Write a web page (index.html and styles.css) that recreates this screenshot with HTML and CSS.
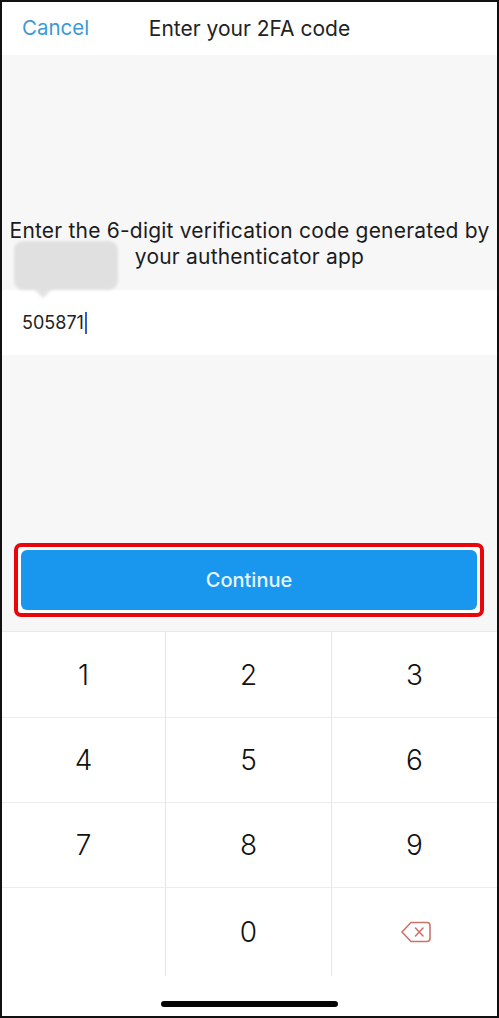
FILE: index.html
```html
<!DOCTYPE html>
<html lang="en">
<head>
  <meta charset="UTF-8" />
  <meta name="viewport" content="width=device-width, initial-scale=1.0"/>
  <title>Enter your 2FA code</title>
  <link rel="stylesheet" href="styles.css">
</head>
<body>
  <div class="screen">
    <header class="topbar">
      <a href="#" class="cancel">Cancel</a>
      <h1>Enter your 2FA code</h1>
    </header>

    <section class="prompt">
      <p>Enter the 6-digit verification code generated by your authenticator app</p>
      <div class="bubble"></div>
    </section>

    <div class="code-row">
      <span class="code">505871</span><span class="caret"></span>
    </div>

    <section class="action">
      <div class="highlight">
        <button class="continue">Continue</button>
      </div>
    </section>

    <div class="keypad">
      <div class="key">1</div>
      <div class="key">2</div>
      <div class="key">3</div>
      <div class="key">4</div>
      <div class="key">5</div>
      <div class="key">6</div>
      <div class="key">7</div>
      <div class="key">8</div>
      <div class="key">9</div>
      <div class="key blank"></div>
      <div class="key">0</div>
      <div class="key del">
        <svg width="32" height="24" viewBox="0 0 32 24" fill="none" stroke="#c9736c" stroke-width="1.6" stroke-linejoin="round" stroke-linecap="round">
          <path d="M11 2.5 H27 a3 3 0 0 1 3 3 V18.5 a3 3 0 0 1 -3 3 H11 L2 12 Z"/>
          <path d="M15.5 8 L23 16 M23 8 L15.5 16"/>
        </svg>
      </div>
    </div>

    <div class="home-bar"></div>
  </div>
</body>
</html>
```

FILE: styles.css
```css
body {
  margin: 0;
  font-family: Inter, 'Liberation Sans', Arial, sans-serif;
  background: #fff;
}

.screen {
  width: 499px;
  height: 1018px;
  box-sizing: border-box;
  border: 2px solid #111;
  display: flex;
  flex-direction: column;
  background: #f7f7f8;
  overflow: hidden;
}

.topbar {
  height: 53px;
  background: #fff;
  position: relative;
  display: flex;
  align-items: center;
  justify-content: center;
}

.topbar h1 {
  margin: 0;
  font-size: 21px;
  font-weight: normal;
  color: #222;
}

.cancel {
  position: absolute;
  left: 20px;
  top: 13px;
  font-size: 20.5px;
  color: #3b9ad6;
  text-decoration: none;
}

.prompt {
  height: 235px;
  position: relative;
  box-sizing: border-box;
  padding: 163px 6px 0;
}

.prompt p {
  margin: 0;
  text-align: center;
  font-size: 21px;
  line-height: 26px;
  letter-spacing: 0.2px;
  color: #1c1c1c;
}

.bubble {
  position: absolute;
  left: 12px;
  top: 186px;
  width: 104px;
  height: 49px;
  border-radius: 9px;
  background: #dcdcdd;
  filter: blur(1.5px);
  opacity: 0.85;
}

.bubble::after {
  content: "";
  position: absolute;
  left: 20px;
  bottom: -8px;
  border-left: 9px solid transparent;
  border-right: 9px solid transparent;
  border-top: 9px solid #dcdcdd;
}

.code-row {
  height: 65px;
  background: #fff;
  display: flex;
  align-items: center;
  padding-left: 20px;
}

.code {
  font-size: 18px;
  color: #222;
}

.caret {
  display: inline-block;
  width: 2px;
  height: 22px;
  margin-left: 1px;
  background: #2f5fc4;
}

.action {
  height: 276px;
  box-sizing: border-box;
  padding: 188px 0 0 12px;
}

.highlight {
  width: 470px;
  height: 74px;
  box-sizing: border-box;
  border: 4px solid #e8060b;
  border-radius: 7px;
  background: #fff;
  padding: 3px;
}

.continue {
  width: 100%;
  height: 100%;
  border: none;
  border-radius: 6px;
  background: #1997ef;
  color: #e6f4ff;
  font-family: Inter, 'Liberation Sans', Arial, sans-serif;
  font-size: 20px;
  font-weight: 500;
}

.keypad {
  display: grid;
  grid-template-columns: 164px 166px 165px;
  grid-template-rows: 86px 85px 85px 88px;
  background: #fff;
  border-top: 1px solid #e8e8e8;
}

.key {
  display: flex;
  align-items: center;
  justify-content: center;
  font-size: 28px;
  font-weight: 300;
  color: #111;
  border-right: 1px solid #e6e6e6;
  border-bottom: 1px solid #ececec;
}

.key:nth-child(3n) {
  border-right: none;
}

.key:nth-child(n+10) {
  border-bottom: none;
}

.del svg {
  margin-left: 2px;
}

.home-bar {
  flex: 1;
  background: #fff;
  display: flex;
  align-items: flex-end;
  justify-content: center;
  padding-bottom: 9px;
}

.home-bar::before {
  content: "";
  width: 177px;
  height: 6px;
  border-radius: 3px;
  background: #050505;
}
```
